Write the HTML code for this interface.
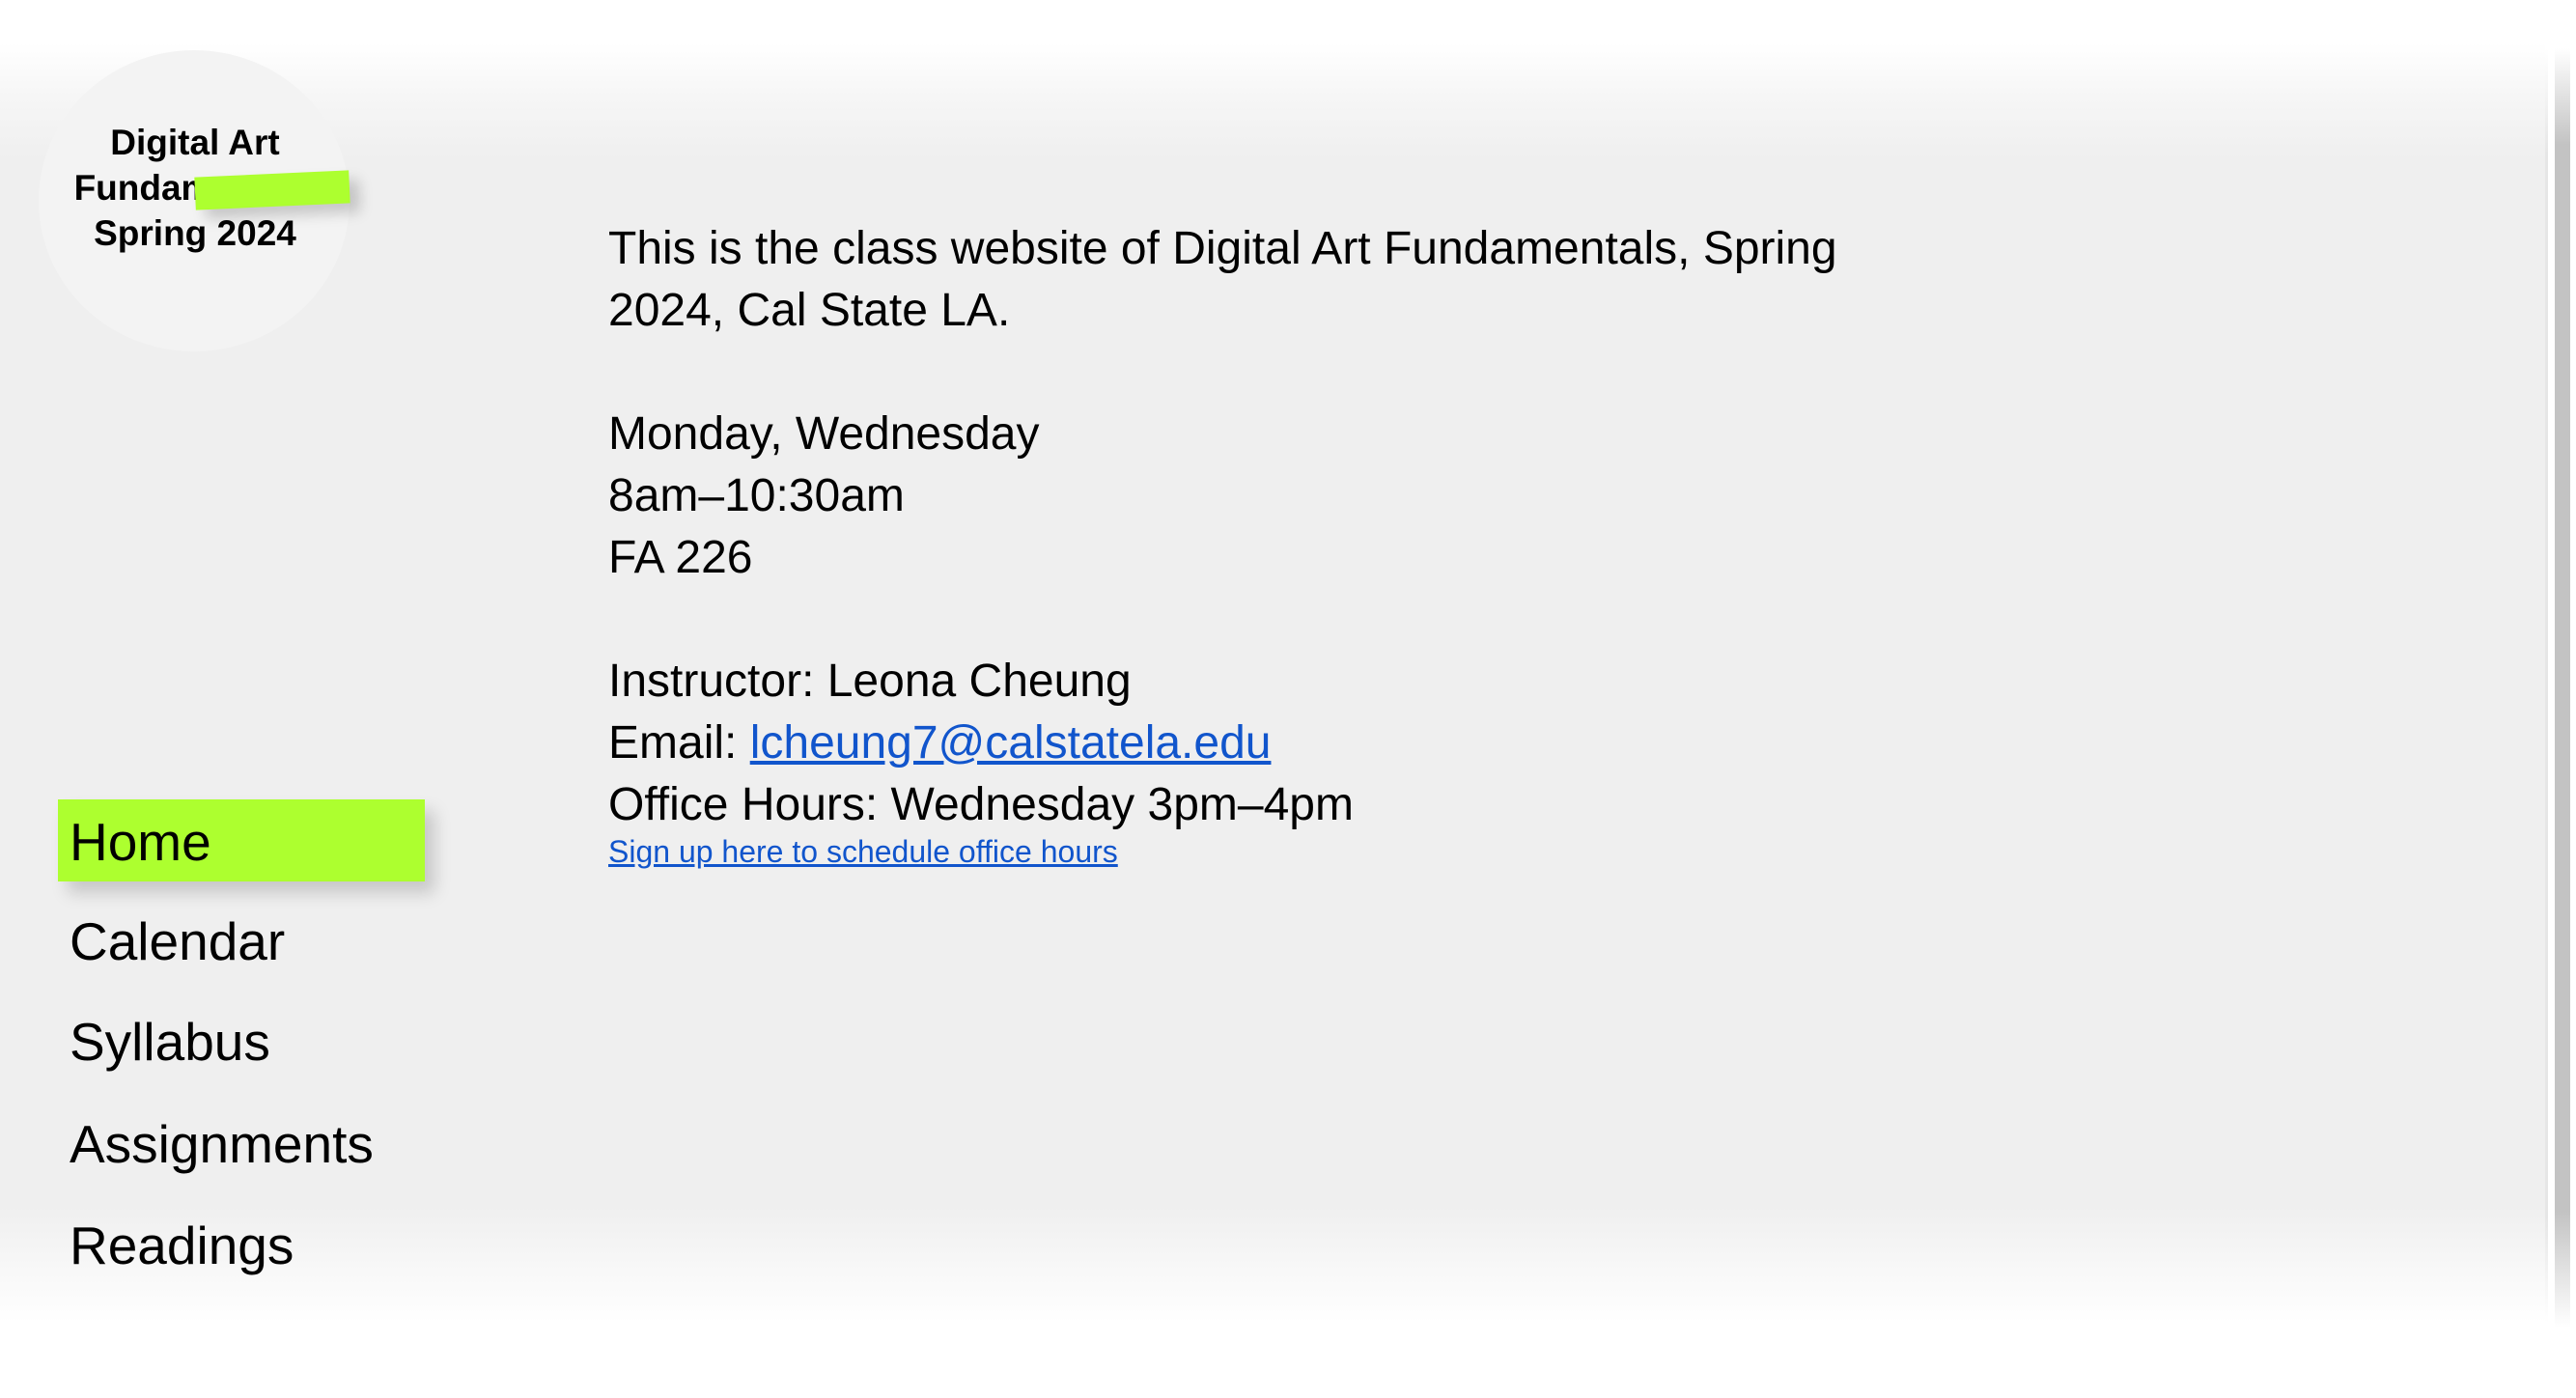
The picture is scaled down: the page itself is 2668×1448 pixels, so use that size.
<!DOCTYPE html>
<html><head><meta charset="utf-8"><style>
html,body{margin:0;padding:0;}
body{width:2668px;height:1448px;position:relative;overflow:hidden;background:#fff;font-family:"Liberation Sans",Arial,sans-serif;color:#000;}
.bg{position:absolute;left:0;top:0;width:2639px;height:1448px;
background:linear-gradient(to bottom,#fff 0px,#fff 45px,#f6f6f6 100px,#efefef 165px,#efefef 1250px,#f7f7f7 1310px,#fff 1370px,#fff 1448px);}
.edge{position:absolute;left:2636px;top:0;width:3px;height:1448px;background:linear-gradient(to bottom,#fff 50px,#e6e6e6 160px,#e6e6e6 1260px,#fff 1370px);}
.bar{position:absolute;left:2646px;top:0;width:16px;height:1448px;background:linear-gradient(to bottom,#fff 50px,#c3c3c3 150px,#c3c3c3 1255px,#fff 1375px);}
.circle{position:absolute;left:40px;top:52px;width:322px;height:312px;border-radius:50%;background:#f3f3f3;}
.logo{position:absolute;left:22px;top:124px;width:360px;text-align:center;font-weight:bold;font-size:37px;line-height:47px;}
.green{position:absolute;left:202px;top:180px;width:160px;height:34px;background:#adff2f;transform:rotate(-2.6deg);box-shadow:10px 10px 14px rgba(0,0,0,.18);}
.nav{position:absolute;left:0;top:0;font-size:55px;line-height:60px;}
.nav div{position:absolute;left:72px;white-space:nowrap;}
.home{position:absolute;left:60px;top:828px;width:380px;height:85px;background:#adff2f;box-shadow:10px 12px 16px rgba(0,0,0,.17);}
.main{position:absolute;left:630px;font-size:48px;line-height:64px;white-space:nowrap;}
a{color:#1155cc;text-decoration:underline;}
.small{position:absolute;left:630px;font-size:32px;white-space:nowrap;}
</style></head><body>
<div class="bg"></div>
<div class="edge"></div>
<div class="bar"></div>
<div class="circle"></div>
<div class="logo">Digital Art<br>Fundamentals<br>Spring 2024</div>
<div class="green"></div>
<div class="home"></div>
<div class="nav">
<div style="top:842px;">Home</div>
<div style="top:945px;">Calendar</div>
<div style="top:1049px;">Syllabus</div>
<div style="top:1155px;">Assignments</div>
<div style="top:1260px;">Readings</div>
</div>
<div class="main" style="top:226px;">This is the class website of Digital Art Fundamentals, Spring<br>2024, Cal State LA.<br><br>Monday, Wednesday<br>8am–10:30am<br>FA 226<br><br>Instructor: Leona Cheung<br>Email: <a href="#">lcheung7@calstatela.edu</a><br>Office Hours: Wednesday 3pm–4pm</div>
<div class="small" style="top:864px;"><a href="#">Sign up here to schedule office hours</a></div>
</body></html>
